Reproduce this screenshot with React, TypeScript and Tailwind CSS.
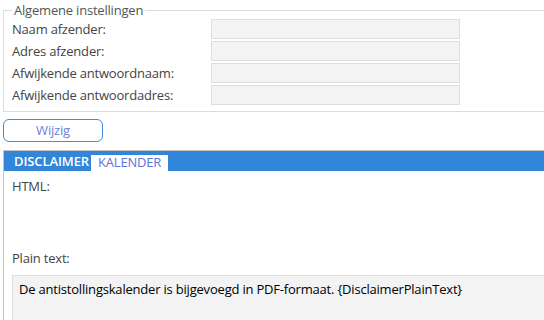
import React from 'react';

const fields = [
  'Naam afzender:',
  'Adres afzender:',
  'Afwijkende antwoordnaam:',
  'Afwijkende antwoordadres:',
];

export default function App() {
  return (
    <div className="w-[544px] h-[320px] overflow-hidden bg-white text-[13px] tracking-[-0.2px] text-[#444] font-['Open_Sans',sans-serif]">
      <fieldset className="mt-[2px] ml-[3px] w-[600px] border border-[#dcdcdc] pl-[8px] pb-[6px]">
        <legend className="px-[2px] leading-[16px] text-[#555]">Algemene instellingen</legend>
        <div className="mt-[1px] flex flex-col gap-[2px]">
          {fields.map((label) => (
            <div key={label} className="flex items-center h-[20px]">
              <span className="w-[199px] leading-[20px]">{label}</span>
              <div className="w-[249px] h-[20px] border border-[#dedede] bg-[#f3f3f3]" />
            </div>
          ))}
        </div>
      </fieldset>

      <button className="mt-[7px] ml-[3px] w-[100px] h-[23px] rounded-[6px] border border-[#3a8ee6] text-[#6b7fdc] leading-[21px]">
        Wijzig
      </button>

      <div className="mt-[8px] ml-[3px] w-[600px] h-[200px] border-l border-t border-[#c4c4c4]">
        <div className="flex items-end h-[20px] bg-[#3186d9]">
          <div className="pl-[10px] pr-[2px] h-[20px] leading-[20px] text-white font-semibold tracking-[-0.1px]">DISCLAIMER</div>
          <div className="px-[7px] h-[16px] leading-[15px] bg-white text-[#5c73d9]">KALENDER</div>
        </div>
        <div className="pl-[8px]">
          <div className="mt-[7px] leading-[16px]">HTML:</div>
          <div className="mt-[56px] leading-[16px]">Plain text:</div>
          <div className="mt-[9px] h-[60px] border border-[#dedede] bg-[#f3f3f3] pl-[6px] pt-[4px] text-black leading-[18px]">
            De antistollingskalender is bijgevoegd in PDF-formaat. {'{DisclaimerPlainText}'}
          </div>
        </div>
      </div>
    </div>
  );
}
